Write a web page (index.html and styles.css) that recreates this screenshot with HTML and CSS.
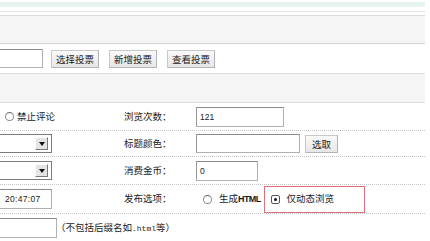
FILE: index.html
```html
<!DOCTYPE html>
<html>
<head>
    <link rel="stylesheet" href="styles.css">
</head>
<body>
    <div class="page">
        <div class="topbar"></div>
        <div class="tabline"></div>
        <div class="toolbar"></div>

        <div class="searchrow">
            <input type="text" class="txt cut search">
            <button class="btn">选择投票</button>
            <button class="btn">新增投票</button>
            <button class="btn">查看投票</button>
        </div>

        <div class="band"></div>

        <div class="form">
            <div class="row r1">
                <div class="left pad"><span class="radio"></span>禁止评论</div>
                <div class="label">浏览次数：</div>
                <div class="value"><input type="text" class="txt views" value="121"></div>
            </div>
            <div class="row r2">
                <div class="left"><div class="select"><span class="arrow"></span></div></div>
                <div class="label">标题颜色：</div>
                <div class="value">
                    <input type="text" class="txt color">
                    <button class="btn pick">选取</button>
                </div>
            </div>
            <div class="row r3">
                <div class="left"><div class="select"><span class="arrow"></span></div></div>
                <div class="label">消费金币：</div>
                <div class="value"><input type="text" class="txt coins" value="0"></div>
            </div>
            <div class="row r4">
                <div class="left"><input type="text" class="txt cut time" value="20:47:07"></div>
                <div class="label">发布选项：</div>
                <div class="value opts">
                    <span class="radio"></span><span class="opt">生成<span class="latin">HTML</span></span>
                    <span class="highlight"><span class="radio on"></span>仅动态浏览</span>
                </div>
            </div>
            <div class="row r5">
                <div class="left wide"><input type="text" class="txt cut name"><span class="hint">（不包括后缀名如<span class="mono">.html</span>等）</span></div>
            </div>
        </div>
    </div>
</body>
</html>
```

FILE: styles.css
```css
* {
    box-sizing: border-box;
}
body {
    margin: 0;
    font-family: "Noto Sans CJK SC", "Noto Sans", sans-serif;
    font-size: 9.5px;
    line-height: 1.2;
    color: #1a1a1a;
    background: #fff;
    overflow: hidden;
}
.page {
    width: 425px;
}
.topbar {
    margin-top: 2px;
    height: 5px;
    background: #e6f4f0;
}
.tabline {
    margin-top: 4px;
    height: 4px;
    border-top: 1px solid #e2e2e2;
}
.toolbar {
    height: 29px;
    background: #f5f5f5;
    border-top: 1px solid #dcdcdc;
    border-bottom: 1px solid #d4d4d4;
}
.searchrow {
    height: 29px;
    display: flex;
    align-items: center;
    gap: 10px;
}
.band {
    height: 30px;
    background: #f5f5f5;
    border-top: 1px solid #dcdcdc;
    border-bottom: 1px solid #dcdcdc;
}
.txt {
    height: 20px;
    border: 1px solid #b0b0b0;
    border-top-color: #8c8c8c;
    border-left-color: #9a9a9a;
    background: #fff;
    font-family: "Liberation Sans", sans-serif;
    font-size: 8.5px;
    color: #1a1a1a;
    padding: 0 3px;
    outline: none;
}
.cut {
    margin-left: -1px;
}
.search {
    width: 44px;
    height: 19px;
    margin-right: -2px;
}
.btn {
    height: 18px;
    padding: 0 4px;
    font-family: inherit;
    font-size: 9.5px;
    color: #1a1a1a;
    background: linear-gradient(#fafafa, #e6e6e6);
    border: 1px solid #c8c8c8;
    border-right-color: #b4b4b4;
    border-bottom-color: #b4b4b4;
    border-radius: 0;
}
.row {
    display: grid;
    grid-template-columns: 124px 72px 1fr;
    align-items: center;
    border-bottom: 1px dotted #c4c4c4;
}
.r1 { height: 28px; }
.r2 { height: 26px; }
.r3 { height: 28px; }
.r4 { height: 29px; }
.r5 {
    height: 27px;
    border-bottom: none;
}
.left {
    display: flex;
    align-items: center;
}
.wide {
    grid-column: 1 / 4;
}
.pad {
    padding-left: 5px;
}
.value {
    display: flex;
    align-items: center;
}
.views { width: 88px; }
.color { width: 104px; height: 19px; }
.coins { width: 62px; }
.pick {
    margin-left: 5px;
    width: 33px;
    padding: 0;
}
.time {
    width: 53px;
    padding-left: 5px;
    letter-spacing: 0.3px;
}
.name {
    width: 58px;
}
.hint {
    margin-left: -1px;
}
.mono {
    font-family: "Liberation Mono", monospace;
    font-size: 8px;
}
.latin {
    font-family: "Liberation Sans", sans-serif;
    font-size: 9px;
    font-weight: bold;
    letter-spacing: -0.6px;
}
.select {
    width: 53px;
    height: 19px;
    margin-left: -1px;
    border: 1px solid #7c7c7c;
    border-left: none;
    display: flex;
    justify-content: flex-end;
    align-items: center;
    padding-right: 3px;
    background: #fff;
}
.arrow {
    width: 13px;
    height: 13px;
    background: #e4e4e4;
    border: 1px solid;
    border-color: #fdfdfd #7a7a7a #7a7a7a #fdfdfd;
    display: flex;
    align-items: center;
    justify-content: center;
}
.arrow::after {
    content: "";
    border-left: 3px solid transparent;
    border-right: 3px solid transparent;
    border-top: 4px solid #111;
}
.radio {
    width: 9px;
    height: 9px;
    border: 1px solid #8a8a8a;
    border-top-color: #6a6a6a;
    border-radius: 50%;
    background: #fff;
    display: inline-flex;
    align-items: center;
    justify-content: center;
    margin-right: 3px;
    flex: none;
}
.radio.on {
    border-radius: 2px;
    border-color: #555;
}
.radio.on::after {
    content: "";
    width: 3px;
    height: 3px;
    border-radius: 50%;
    background: #111;
}
.opts {
    padding-left: 7px;
}
.opts > .radio {
    margin-right: 7px;
}
.highlight {
    display: inline-flex;
    align-items: center;
    height: 27px;
    width: 101px;
    margin-left: 3px;
    padding-left: 6px;
    border: 1.5px solid #e0707c;
}
.highlight .radio {
    margin-right: 7px;
}
```
